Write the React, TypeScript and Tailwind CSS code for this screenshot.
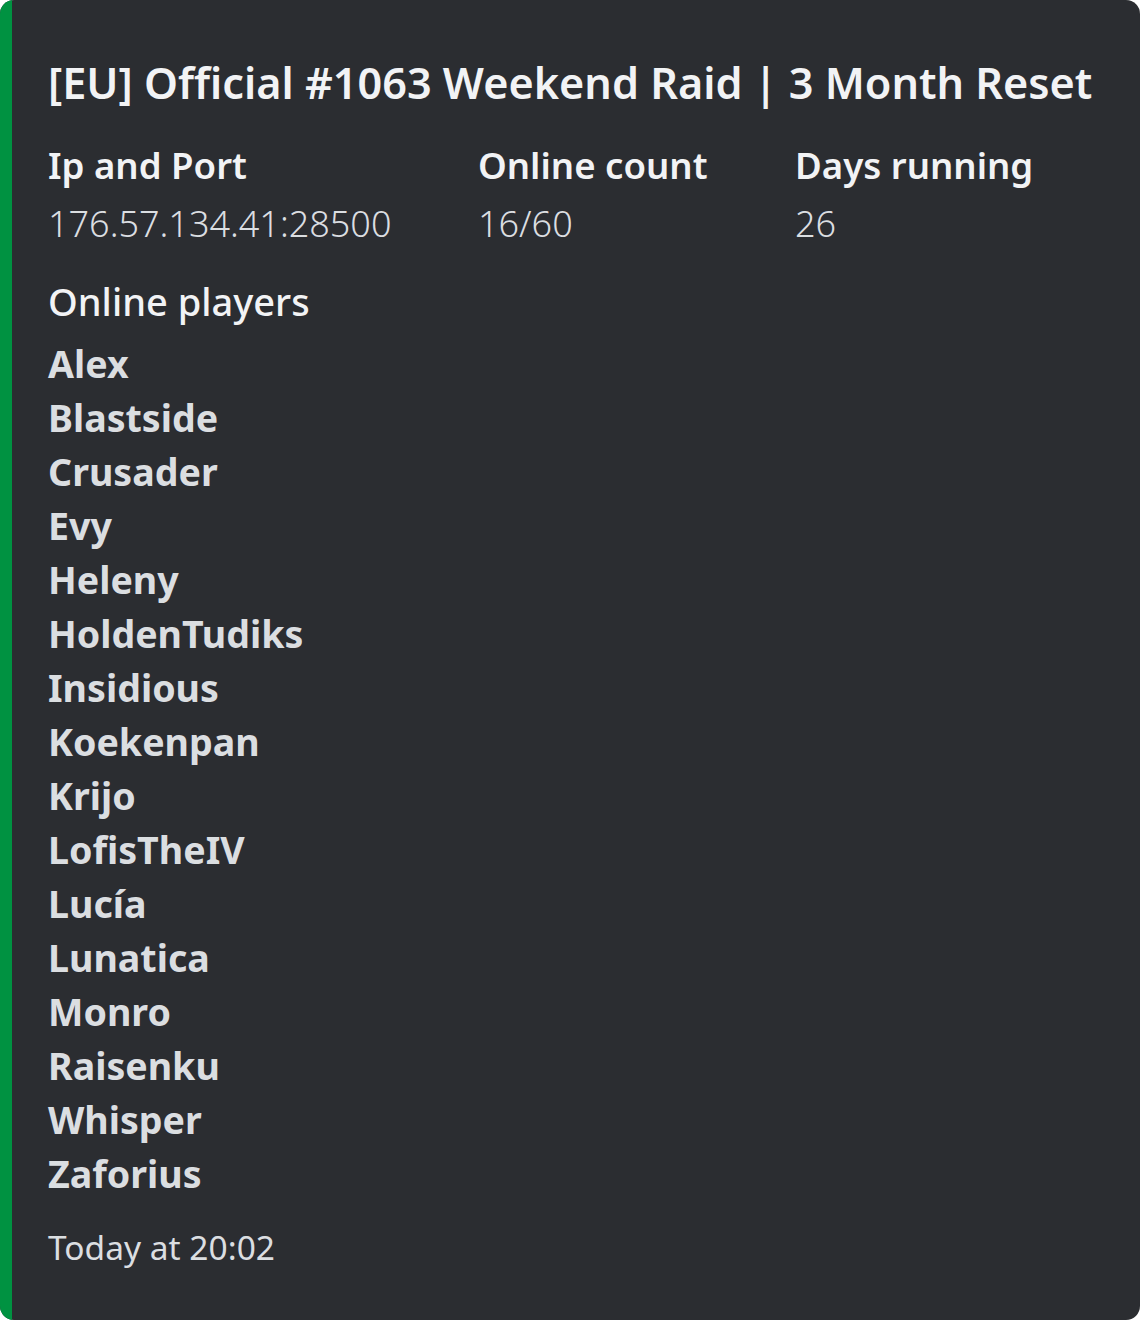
import React from "react";

const players = [
  "Alex",
  "Blastside",
  "Crusader",
  "Evy",
  "Heleny",
  "HoldenTudiks",
  "Insidious",
  "Koekenpan",
  "Krijo",
  "LofisTheIV",
  "Lucía",
  "Lunatica",
  "Monro",
  "Raisenku",
  "Whisper",
  "Zaforius",
];

const fields = [
  { name: "Ip and Port", value: "176.57.134.41:28500" },
  { name: "Online count", value: "16/60" },
  { name: "Days running", value: "26" },
];

export default function App() {
  return (
    <div
      className="flex w-[1140px] h-[1320px] rounded-[14px] overflow-hidden bg-[#2b2d31]"
      style={{ fontFamily: '"Noto Sans", "Open Sans", sans-serif' }}
    >
      <div className="w-[12px] shrink-0 bg-[#009241]" />
      <div className="flex flex-col pl-[36px] pr-[24px] pt-[55px]">
        <div className="text-[43.2px] leading-[56px] font-semibold text-[#f2f3f5] whitespace-nowrap">
          [EU] Official #1063 Weekend Raid | 3 Month Reset
        </div>
        <div className="grid grid-cols-[430px_317px_300px] mt-[30px]">
          {fields.map((f) => (
            <div key={f.name} className="flex flex-col">
              <div className="text-[36.6px] leading-[48px] font-semibold text-[#f2f3f5] whitespace-nowrap">
                {f.name}
              </div>
              <div className="mt-[11px] text-[36px] leading-[48px] font-light text-[#dbdee1] whitespace-nowrap">
                {f.value}
              </div>
            </div>
          ))}
        </div>
        <div className="mt-[31px] text-[38px] leading-[44px] font-medium text-[#f2f3f5]">
          Online players
        </div>
        <div className="mt-[14px] flex flex-col">
          {players.map((p) => (
            <div key={p} className="text-[37.6px] leading-[54px] font-bold text-[#dbdee1]">
              {p}
            </div>
          ))}
        </div>
        <div className="mt-[24px] text-[33.5px] leading-[44px] font-normal text-[#dbdee1]">
          Today at 20:02
        </div>
      </div>
    </div>
  );
}
